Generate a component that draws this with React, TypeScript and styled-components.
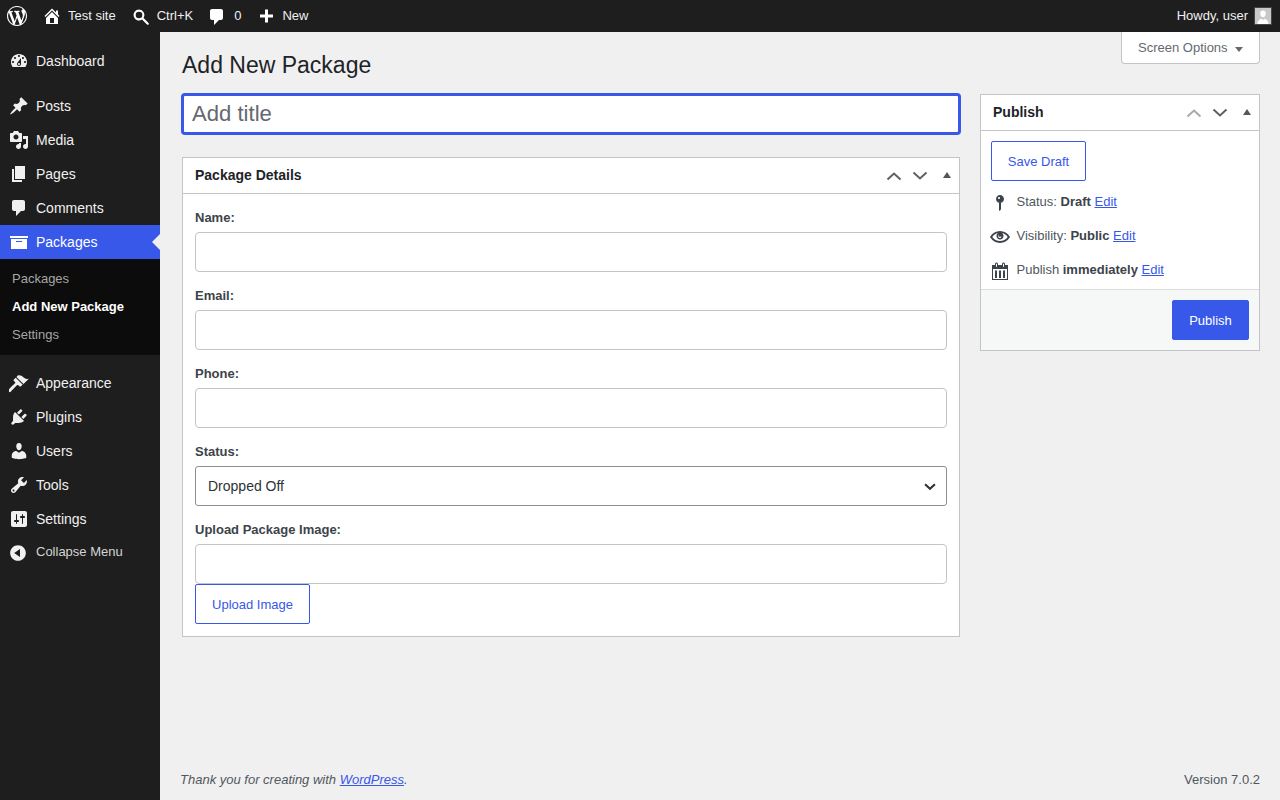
import React from 'react';
import styled, { createGlobalStyle } from 'styled-components';

const P = {
  wp: 'M20 10c0-5.51-4.49-10-10-10C4.48 0 0 4.49 0 10c0 5.52 4.48 10 10 10 5.51 0 10-4.48 10-10zM7.78 15.37L4.37 6.22c.55-.02 1.17-.08 1.17-.08.5-.06.44-1.13-.06-1.11 0 0-1.45.11-2.37.11-.18 0-.37 0-.58-.01C4.12 2.69 6.87 1.11 10 1.11c2.33 0 4.45.87 6.05 2.34-.68-.11-1.65.39-1.65 1.58 0 .74.45 1.36.9 2.1.35.61.55 1.36.55 2.46 0 1.49-1.4 5-1.4 5l-3.03-8.37c.54-.02.82-.17.82-.17.5-.05.44-1.25-.06-1.22 0 0-1.44.12-2.38.12-.87 0-2.33-.12-2.33-.12-.5-.03-.56 1.2-.06 1.22l.92.08 1.26 3.41zM17.41 10c.24-.64.74-1.87.43-4.25.7 1.29 1.05 2.71 1.05 4.25 0 3.29-1.73 6.24-4.4 7.78.97-2.59 1.94-5.2 2.92-7.78zM6.1 18.09C3.12 16.65 1.11 13.53 1.11 10c0-1.3.23-2.48.72-3.59C3.25 10.3 4.67 14.2 6.1 18.09zm4.03-6.63l2.58 6.98c-.86.29-1.76.45-2.71.45-.79 0-1.57-.11-2.29-.33.81-2.38 1.62-4.74 2.42-7.1z',
  home: 'M16 8.5l1.53 1.53-1.06 1.06L10 4.62l-6.47 6.47-1.06-1.06L10 2.5l4 4v-2h2v4zm-6-2.46l6 5.99V18H4v-5.97zM12 17v-5H8v5h4z',
  search: 'M8 2.5a5.5 5.5 0 0 1 4.6 8.5l4.9 4.9c.5.5.5 1.1.1 1.6-.5.5-1.1.4-1.6-.1L11 12.6A5.5 5.5 0 1 1 8 2.5zm0 2.2a3.3 3.3 0 1 0 0 6.6 3.3 3.3 0 0 0 0-6.6z',
  comment: 'M5 2h9c1.1 0 2 .9 2 2v7c0 1.1-.9 2-2 2h-2l-5 5v-5H5c-1.1 0-2-.9-2-2V4c0-1.1.9-2 2-2z',
  plus: 'M17 8.500v3h-5v5H9v-5H4v-3h5v-5h3v5h5z',
  dashboard: 'M3.76 16h12.48c1.1-1.37 1.76-3.11 1.76-5 0-4.42-3.58-8-8-8s-8 3.58-8 8c0 1.89.66 3.63 1.76 5zM10 4c.55 0 1 .45 1 1s-.45 1-1 1-1-.45-1-1 .45-1 1-1zM6 6c.55 0 1 .45 1 1s-.45 1-1 1-1-.45-1-1 .45-1 1-1zm8 0c.55 0 1 .45 1 1s-.45 1-1 1-1-.45-1-1 .45-1 1-1zm-5.37 5.55L12 7v6c0 1.1-.9 2-2 2s-2-.9-2-2c0-.57.24-1.08.63-1.45zM4 10c.55 0 1 .45 1 1s-.45 1-1 1-1-.45-1-1 .45-1 1-1zm12 0c.55 0 1 .45 1 1s-.45 1-1 1-1-.45-1-1 .45-1 1-1zm-5 3c0-.55-.45-1-1-1s-1 .45-1 1 .45 1 1 1 1-.45 1-1z',
  post: 'M10.44 3.02l1.82-1.82 6.36 6.35-1.83 1.82c-1.05-.68-2.48-.57-3.41.36l-.75.75c-.92.93-1.04 2.35-.35 3.41l-1.83 1.82-2.41-2.41-2.8 2.79c-.42.42-3.38 2.71-3.8 2.29s1.86-3.39 2.28-3.81l2.79-2.79L4.1 9.36l1.83-1.82c1.05.69 2.48.57 3.4-.36l.75-.75c.93-.92 1.05-2.35.36-3.41z',
  media: 'M13 11V4c0-.55-.45-1-1-1h-1.67L9 1H5L3.67 3H2c-.55 0-1 .45-1 1v7c0 .55.45 1 1 1h10c.55 0 1-.45 1-1zM7 4.5c1.38 0 2.5 1.12 2.5 2.5S8.38 9.5 7 9.5 4.5 8.38 4.5 7 5.62 4.5 7 4.5zM14 6h5v10.5c0 1.38-1.12 2.5-2.5 2.5S14 17.88 14 16.5s1.12-2.5 2.5-2.5c.17 0 .34.02.5.05V9h-3V6zm-4 8.05V13h2v3.5c0 1.38-1.12 2.5-2.5 2.5S7 17.88 7 16.5 8.12 14 9.5 14c.17 0 .34.02.5.05z',
  page: 'M6 15V2h10v13H6zm-1 1h8v2H3V5h2v11z',
  archive: 'M19 4v2H1V4h18zM2 7h16v10H2V7zm11 3V9H7v1h6z',
  appearance: 'M14.48 11.06L7.41 3.99l1.5-1.5c.5-.56 2.3-.47 3.51.32 1.21.8 1.43 1.28 2.91 2.1 1.18.64 2.45 1.26 4.45.85zm-.71.71L6.7 4.7 4.93 6.47c-.39.39-.39 1.02 0 1.41l1.06 1.06c.39.39.39 1.03 0 1.42-.6.6-6.4 6.23-6.4 6.23-.59.59-.59 1.54 0 2.12.59.59 1.53.59 2.12 0 0 0 5.63-5.81 6.23-6.41.39-.38 1.03-.38 1.42 0l1.06 1.06c.39.39 1.02.39 1.41 0z',
  plugins: 'M13.11 4.36L9.87 7.6 8 5.73l3.24-3.24c.35-.34 1.05-.2 1.56.32.52.51.66 1.21.31 1.55zm-8 1.77l.91-1.12 9.01 9.01-1.19.84c-.71.71-2.63 1.16-3.82 1.16H6.14L4.9 17.26c-.59.59-1.54.59-2.12 0-.59-.58-.59-1.53 0-2.12l1.24-1.24v-3.88c0-1.13.4-3.19 1.09-3.89zm7.26 3.97l3.24-3.24c.34-.35 1.04-.21 1.55.31.52.51.66 1.21.31 1.55l-3.24 3.25z',
  users: 'M10 9.25c-2.27 0-2.73-3.44-2.73-3.44C7 4.02 7.82 2 9.97 2c2.16 0 2.98 2.02 2.71 3.81 0 0-.41 3.44-2.68 3.44zm0 2.57L12.72 10c2.39 0 4.52 2.33 4.52 4.53v2.49s-3.65 1.13-7.24 1.13c-3.65 0-7.24-1.13-7.24-1.13v-2.49c0-2.25 1.94-4.48 4.47-4.48z',
  tools: 'M16.68 9.77c-1.34 1.34-3.3 1.67-4.95.99l-5.41 6.52c-.99.99-2.59.99-3.58 0s-.99-2.59 0-3.57l6.52-5.42c-.68-1.65-.35-3.61.99-4.95 1.28-1.28 3.12-1.62 4.72-1.06l-2.89 2.89 2.82 2.82 2.86-2.87c.53 1.58.18 3.39-1.08 4.65zM3.81 16.21c.4.39 1.04.39 1.43 0 .4-.4.4-1.04 0-1.43-.39-.4-1.03-.4-1.43 0-.39.39-.39 1.03 0 1.43z',
  settings: 'M18 16V4c0-1.1-.9-2-2-2H4c-1.1 0-2 .9-2 2v12c0 1.1.9 2 2 2h12c1.1 0 2-.9 2-2zM8 11h1c.55 0 1 .45 1 1s-.45 1-1 1H8v1.5c0 .28-.22.5-.5.5s-.5-.22-.5-.5V13H6c-.55 0-1-.45-1-1s.45-1 1-1h1V5.5c0-.28.22-.5.5-.5s.5.22.5.5V11zm5-2h-1c-.55 0-1-.45-1-1s.45-1 1-1h1V5.5c0-.28.22-.5.5-.5s.5.22.5.5V7h1c.55 0 1 .45 1 1s-.45 1-1 1h-1v5.5c0 .28-.22.5-.5.5s-.5-.22-.5-.5V9z',
  collapse: 'M10 2.16c4.33 0 7.84 3.51 7.84 7.84s-3.51 7.84-7.84 7.84S2.16 14.33 2.16 10 5.71 2.16 10 2.16zm2 11.72V6.12L6.18 9.97z',
  pin: 'M14 6c0 1.86-1.28 3.41-3 3.86V16c0 1-2 2-2 2V9.86c-1.72-.45-3-2-3-3.86 0-2.21 1.79-4 4-4s4 1.79 4 4zM8 5c0 .55.45 1 1 1s1-.45 1-1-.45-1-1-1-1 .45-1 1z',
  eye: 'M19.7 9.4C17.7 6 14 3.9 10 3.9S2.3 6 .3 9.4L0 10l.3.6c2 3.4 5.7 5.5 9.7 5.5s7.7-2.1 9.7-5.5l.3-.6-.3-.6zM10 14.1c-3.1 0-6-1.6-7.7-4.1C3.6 8 5.7 6.6 8 6.1c-.9.6-1.5 1.7-1.5 2.9 0 1.9 1.6 3.5 3.5 3.5s3.5-1.6 3.5-3.5c0-1.2-.6-2.3-1.5-2.9 2.3.5 4.4 1.9 5.7 3.9-1.7 2.5-4.6 4.1-7.7 4.1zM9.6 7.3a1.3 1.3 0 1 0 1.6 1.6c.4 1.2-.5 2.3-1.6 2.1-1.9-.4-1.9-3.2 0-3.7z',
  calendar: 'M15 4h3v15H2V4h3V3c0-.41.15-.76.44-1.06.29-.29.65-.44 1.06-.44s.77.15 1.06.44c.29.3.44.65.44 1.06v1h4V3c0-.41.15-.76.44-1.06.29-.29.65-.44 1.06-.44s.77.15 1.06.44c.29.3.44.65.44 1.06v1zM6 3v2.5c0 .28.22.5.5.5s.5-.22.5-.5V3c0-.28-.22-.5-.5-.5S6 2.72 6 3zm7 0v2.5c0 .28.22.5.5.5s.5-.22.5-.5V3c0-.28-.22-.5-.5-.5s-.5.22-.5.5zm4 15V8H3v10h14zM5 9.5h2V17H5V9.5zm4 0h2V17H9V9.5zm4 0h2V17h-2V9.5z',
};

const Global = createGlobalStyle`
  html, body { margin: 0; padding: 0; height: 100%; background: #f0f0f0; }
  body { font-family: "Liberation Sans", Arial, sans-serif; font-size: 13px; line-height: 1.4; color: #3c434a; }
  * { box-sizing: border-box; }
`;

const Glyph = styled.svg<{ $s?: number }>`
  display: block;
  flex: none;
  width: ${p => p.$s ?? 20}px;
  height: ${p => p.$s ?? 20}px;
  fill: currentColor;
`;
const Icon = ({ d, s }: { d: string; s?: number }) => (
  <Glyph $s={s} viewBox="0 0 20 20" aria-hidden="true"><path d={d} /></Glyph>
);

const Shell = styled.div`
  display: grid;
  grid-template-columns: 160px 1fr;
  grid-template-rows: 32px 1fr;
  width: 1280px;
  height: 800px;
  overflow: hidden;
`;

const AdminBar = styled.header`
  grid-column: 1 / 3;
  display: flex;
  align-items: center;
  justify-content: space-between;
  background: #1e1e1e;
  color: #f0f0f0;
`;
const BarGroup = styled.div`
  display: flex;
  align-items: center;
  height: 32px;
`;
const BarItem = styled.a<{ $gap?: number; $left?: number; $drop?: boolean }>`
  display: flex;
  align-items: center;
  gap: ${p => p.$gap ?? 6}px;
  margin-left: ${p => p.$left ?? 0}px;
  height: 32px;
  color: #f0f0f0;
  font-size: 13px;
  line-height: 32px;
  svg { color: #fff; margin-top: ${p => (p.$drop ? 2 : 0)}px; }
`;
const Avatar = styled.span`
  display: flex;
  align-items: flex-end;
  justify-content: center;
  width: 18px;
  height: 18px;
  margin: 0 8px 0 6px;
  background: #c8c8c8;
  border: 1px solid #444;
  overflow: hidden;
  color: #fff;
`;

const Sidebar = styled.nav`
  background: #1e1e1e;
  padding-top: 12px;
  color: #f0f0f0;
`;
const MenuItem = styled.a<{ $active?: boolean; $sep?: boolean }>`
  position: relative;
  display: flex;
  align-items: center;
  gap: 7px;
  height: 34px;
  padding: 2px 0 0 9px;
  margin-top: ${p => (p.$sep ? 11 : 0)}px;
  font-size: 14px;
  color: ${p => (p.$active ? '#fff' : '#f0f0f0')};
  background: ${p => (p.$active ? '#3858e9' : 'transparent')};
  svg { margin-top: -2px; }
  ${p => p.$active && `
    &::after {
      content: '';
      position: absolute;
      right: 0;
      top: 50%;
      margin-top: -8px;
      border: 8px solid transparent;
      border-right-color: #f0f0f0;
    }
  `}
`;
const Submenu = styled.div`
  display: flex;
  flex-direction: column;
  padding: 5px 0 7px;
  background: #0c0c0c;
`;
const SubItem = styled.a<{ $current?: boolean }>`
  display: flex;
  align-items: center;
  height: 28px;
  padding: 2px 0 0 12px;
  font-size: 13px;
  font-weight: ${p => (p.$current ? 600 : 400)};
  color: ${p => (p.$current ? '#fff' : '#a6a6a6')};
`;
const CollapseItem = styled.a`
  display: flex;
  align-items: center;
  gap: 8px;
  height: 32px;
  padding-left: 8px;
  font-size: 13px;
  color: #d4d4d4;
  svg { margin-top: 2px; color: #f0f0f0; }
`;

const Main = styled.main`
  display: flex;
  flex-direction: column;
  min-width: 0;
  padding: 0 20px;
`;
const TopRow = styled.div`
  display: flex;
  justify-content: space-between;
  align-items: flex-start;
  height: 62px;
  padding-left: 2px;
`;
const Heading = styled.h1`
  margin: 0;
  padding-top: 17px;
  font-size: 23px;
  font-weight: 400;
  line-height: 32px;
  color: #1d2327;
`;
const ScreenTab = styled.button`
  display: flex;
  align-items: center;
  gap: 7px;
  height: 32px;
  width: 139px;
  padding: 2px 0 0 16px;
  font: inherit;
  font-size: 13px;
  color: #646970;
  background: #fff;
  border: 1px solid #c3c4c7;
  border-top: 0;
  border-radius: 0 0 4px 4px;
  &::after {
    content: '';
    margin-top: 2px;
    border: 4px solid transparent;
    border-top: 5px solid #646970;
    border-bottom: 0;
  }
`;
const Columns = styled.div`
  display: grid;
  grid-template-columns: 778px 280px;
  justify-content: space-between;
  align-items: start;
  padding-left: 2px;
  flex: 1;
`;
const EditorColumn = styled.div`
  display: flex;
  flex-direction: column;
  gap: 23px;
`;
const TitleInput = styled.input`
  display: block;
  width: 778px;
  height: 40px;
  padding: 3px 8px;
  font: inherit;
  font-size: 22.1px;
  line-height: 1;
  color: #1d2327;
  background: #fff;
  border: 2px solid #3858e9;
  border-radius: 3px;
  outline: none;
  box-shadow: 0 0 0 1px #3858e9;
  &::placeholder { color: #646970; opacity: 1; }
`;
const Box = styled.section`
  background: #fff;
  border: 1px solid #c3c4c7;
`;
const BoxHeader = styled.div`
  display: flex;
  align-items: center;
  justify-content: space-between;
  height: 36px;
  padding: 0 0 0 12px;
  border-bottom: 1px solid #c3c4c7;
`;
const BoxTitle = styled.h2`
  margin: 0;
  font-size: 14px;
  font-weight: 600;
  line-height: 1.4;
  color: #1d2327;
`;
const BoxTools = styled.div`
  display: flex;
  align-items: center;
`;
const ToolBtn = styled.span<{ $off?: boolean }>`
  display: flex;
  align-items: center;
  justify-content: center;
  width: 26px;
  height: 36px;
  color: ${p => (p.$off ? '#a7aaad' : '#5a6167')};
`;
const ToggleBtn = styled.span`
  display: flex;
  align-items: center;
  justify-content: center;
  width: 26px;
  height: 36px;
  padding: 0 0 2px 2px;
  &::before {
    content: '';
    border: 4px solid transparent;
    border-bottom: 6px solid #50575e;
    border-top: 0;
  }
`;
const Chevron = ({ up }: { up?: boolean }) => (
  <Glyph $s={16} viewBox="0 0 16 16" aria-hidden="true" style={{ fill: 'none' }}>
    <path d={up ? 'M1.500 11.500 8 5.500l6.500 6' : 'M1.500 4.500 8 10.500l6.500-6'} stroke="currentColor" strokeWidth="2" />
  </Glyph>
);
const Tools = ({ upOff }: { upOff?: boolean }) => (
  <BoxTools>
    <ToolBtn $off={upOff}><Chevron up /></ToolBtn>
    <ToolBtn><Chevron /></ToolBtn>
    <ToggleBtn />
  </BoxTools>
);
const Form = styled.div`
  display: flex;
  flex-direction: column;
  padding: 12px;
`;
const Field = styled.div`
  display: flex;
  flex-direction: column;
  margin-bottom: 12px;
  &:last-child { margin-bottom: 0; align-items: flex-start; }
`;
const Label = styled.label`
  display: block;
  height: 18px;
  margin: 3px 0 5px;
  font-size: 13px;
  font-weight: 600;
  line-height: 18px;
  color: #3c434a;
`;
const TextInput = styled.input`
  display: block;
  width: 100%;
  height: 40px;
  padding: 0 12px;
  font: inherit;
  background: #fff;
  border: 1px solid #c3c4c7;
  border-radius: 4px;
  outline: none;
`;
const Select = styled.select`
  display: block;
  width: 100%;
  height: 40px;
  padding: 2px 24px 0 12px;
  font: inherit;
  font-size: 14px;
  color: #2c3338;
  appearance: none;
  background: #fff url("data:image/svg+xml,%3Csvg xmlns='http://www.w3.org/2000/svg' width='20' height='20'%3E%3Cpath d='M3 7.500l7 6.500 7-6.500' fill='none' stroke='%232c3338' stroke-width='3'/%3E%3C/svg%3E") no-repeat right 9px top 50% / 14px 14px;
  border: 1px solid #8c8f94;
  border-radius: 3px;
`;
const OutlineBtn = styled.button<{ $w: number }>`
  display: block;
  width: ${p => p.$w}px;
  height: 40px;
  padding: 2px 0 0;
  font: inherit;
  font-size: 13px;
  color: #3858e9;
  background: #fff;
  border: 1px solid #3858e9;
  border-radius: 2px;
`;
const SideBody = styled.div`
  display: flex;
  flex-direction: column;
  align-items: flex-start;
  padding: 10px 10px 3px;
`;
const MetaList = styled.div`
  display: flex;
  flex-direction: column;
  padding-top: 3px;
`;
const MetaRow = styled.div`
  display: flex;
  align-items: center;
  gap: 6.5px;
  height: 34px;
  padding-top: 1px;
  color: #50575e;
  font-size: 13px;
  svg { color: #3c434a; margin: 3px 0 0 -1px; }
  b { color: #3c434a; font-weight: 600; }
  span { padding-top: 1px; }
`;
const MetaLink = styled.a`
  color: #3858e9;
  text-decoration: underline;
`;
const SideFooter = styled.div`
  display: flex;
  justify-content: flex-end;
  padding: 10px;
  background: #f6f7f7;
  border-top: 1px solid #dcdcde;
`;
const PrimaryBtn = styled.button`
  width: 77px;
  height: 40px;
  padding: 2px 0 0;
  font: inherit;
  font-size: 13px;
  color: #fff;
  background: #3858e9;
  border: 1px solid #3858e9;
  border-radius: 2px;
`;
const Footer = styled.footer`
  display: flex;
  justify-content: space-between;
  height: 40px;
  padding-top: 11px;
  flex: none;
  color: #50575e;
  font-size: 13px;
  line-height: 1.4;
  em a { color: #3858e9; text-decoration: underline; }
`;

export default function App() {
  return (
    <>
      <Global />
      <Shell>
        <AdminBar>
          <BarGroup>
            <BarItem $left={7}><Icon d={P.wp} /></BarItem>
            <BarItem $left={15}><Icon d={P.home} />Test site</BarItem>
            <BarItem $left={15} $drop><Icon d={P.search} />Ctrl+K</BarItem>
            <BarItem $left={14} $gap={7} $drop><Icon d={P.comment} />0</BarItem>
            <BarItem $left={15}><Icon d={P.plus} />New</BarItem>
          </BarGroup>
          <BarGroup>
            <BarItem>Howdy, user</BarItem>
            <Avatar>
              <Glyph $s={16} viewBox="0 0 16 16" aria-hidden="true"><path d="M8 2.500c1.700 0 2.800 1.300 2.800 3.100 0 1.900-1.100 3.700-2.800 3.700S5.200 7.500 5.200 5.600C5.200 3.800 6.300 2.500 8 2.500zM2.500 16c0-3 2-4.800 3.800-5.200L8 12l1.700-1.200c1.800.4 3.800 2.200 3.800 5.200z" /></Glyph>
            </Avatar>
          </BarGroup>
        </AdminBar>
        <Sidebar>
          <MenuItem><Icon d={P.dashboard} />Dashboard</MenuItem>
          <MenuItem $sep><Icon d={P.post} />Posts</MenuItem>
          <MenuItem><Icon d={P.media} />Media</MenuItem>
          <MenuItem><Icon d={P.page} />Pages</MenuItem>
          <MenuItem><Icon d={P.comment} />Comments</MenuItem>
          <MenuItem $active><Icon d={P.archive} />Packages</MenuItem>
          <Submenu>
            <SubItem>Packages</SubItem>
            <SubItem $current>Add New Package</SubItem>
            <SubItem>Settings</SubItem>
          </Submenu>
          <MenuItem $sep><Icon d={P.appearance} />Appearance</MenuItem>
          <MenuItem><Icon d={P.plugins} />Plugins</MenuItem>
          <MenuItem><Icon d={P.users} />Users</MenuItem>
          <MenuItem><Icon d={P.tools} />Tools</MenuItem>
          <MenuItem><Icon d={P.settings} />Settings</MenuItem>
          <CollapseItem><Icon d={P.collapse} /><span>Collapse Menu</span></CollapseItem>
        </Sidebar>
        <Main>
          <TopRow>
            <Heading>Add New Package</Heading>
            <ScreenTab>Screen Options</ScreenTab>
          </TopRow>
          <Columns>
            <EditorColumn>
              <TitleInput placeholder="Add title" />
              <Box>
                <BoxHeader>
                  <BoxTitle>Package Details</BoxTitle>
                  <Tools />
                </BoxHeader>
                <Form>
                  <Field><Label>Name:</Label><TextInput /></Field>
                  <Field><Label>Email:</Label><TextInput /></Field>
                  <Field><Label>Phone:</Label><TextInput /></Field>
                  <Field>
                    <Label>Status:</Label>
                    <Select defaultValue="Dropped Off"><option>Dropped Off</option></Select>
                  </Field>
                  <Field>
                    <Label>Upload Package Image:</Label>
                    <TextInput />
                    <OutlineBtn $w={115}>Upload Image</OutlineBtn>
                  </Field>
                </Form>
              </Box>
            </EditorColumn>
            <Box>
              <BoxHeader>
                <BoxTitle>Publish</BoxTitle>
                <Tools upOff />
              </BoxHeader>
              <SideBody>
                <OutlineBtn $w={95}>Save Draft</OutlineBtn>
                <MetaList>
                  <MetaRow><Icon d={P.pin} /><span>Status: <b>Draft</b> <MetaLink>Edit</MetaLink></span></MetaRow>
                  <MetaRow><Icon d={P.eye} /><span>Visibility: <b>Public</b> <MetaLink>Edit</MetaLink></span></MetaRow>
                  <MetaRow><Icon d={P.calendar} /><span>Publish <b>immediately</b> <MetaLink>Edit</MetaLink></span></MetaRow>
                </MetaList>
              </SideBody>
              <SideFooter><PrimaryBtn>Publish</PrimaryBtn></SideFooter>
            </Box>
          </Columns>
          <Footer>
            <em>Thank you for creating with <a>WordPress</a>.</em>
            <span>Version 7.0.2</span>
          </Footer>
        </Main>
      </Shell>
    </>
  );
}
